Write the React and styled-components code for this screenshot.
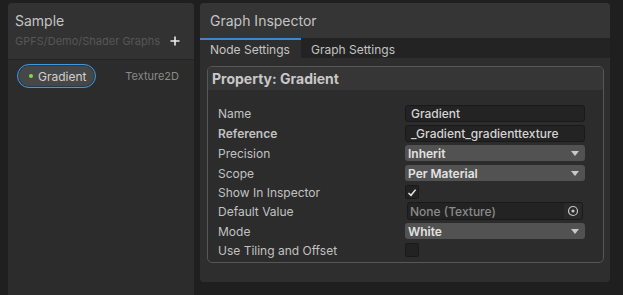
import React from 'react';
import styled, { createGlobalStyle } from 'styled-components';

const GlobalStyle = createGlobalStyle`
  html, body {
    margin: 0;
    padding: 0;
    background: #1f1f1f;
    font-family: Inter, "Noto Sans", sans-serif;
    overflow: hidden;
  }
`;

const Page = styled.div`
  display: flex;
  align-items: flex-start;
  gap: 6px;
  padding: 3px 0 0 8px;
  height: 292px;
`;

const Blackboard = styled.div`
  width: 186px;
  height: 300px;
  background: #2c2c2c;
  border-radius: 4px 4px 0 0;
  display: flex;
  flex-direction: column;
`;

const BoardHeader = styled.div`
  height: 56px;
  background: #323232;
  border-bottom: 1px solid #242424;
  border-radius: 4px 4px 0 0;
  padding: 0 7px;
  display: flex;
  flex-direction: column;
`;

const BoardTitle = styled.div`
  font-size: 14px;
  color: #c4c4c4;
  margin-top: 9px;
  line-height: 17px;
`;

const SubRow = styled.div`
  display: flex;
  align-items: center;
  justify-content: space-between;
  margin-top: 5px;
`;

const SubTitle = styled.span`
  font-size: 11px;
  color: #565656;
`;

const AddButton = styled.span`
  display: flex;
  margin-right: 7px;
`;

const PropRow = styled.div`
  display: flex;
  align-items: center;
  justify-content: space-between;
  padding: 4px 15px 0 9px;
`;

const Pill = styled.div`
  display: flex;
  align-items: center;
  gap: 5px;
  height: 22px;
  width: 77px;
  border: 1px solid #3d9ae0;
  border-radius: 12px;
  background: #474747;
  box-shadow: inset 0 0 0 1px #263a4a;
  font-size: 12px;
  color: #d0d0d0;
`;

const Dot = styled.span`
  width: 4px;
  height: 4px;
  border-radius: 50%;
  background: #84d84c;
  margin-left: 11px;
`;

const TypeLabel = styled.span`
  font-size: 11px;
  color: #8a8a8a;
`;

const Inspector = styled.div`
  width: 410px;
  height: 279px;
  background: #2e2e2e;
  border-radius: 4px;
  display: flex;
  flex-direction: column;
`;

const InspectorHeader = styled.div`
  height: 35px;
  background: #353535;
  border-radius: 4px 4px 0 0;
  padding-left: 10px;
  font-size: 14px;
  color: #c4c4c4;
  display: flex;
  align-items: center;
`;

const TabBar = styled.div`
  display: flex;
  height: 20px;
  background: #232323;
`;

const Tab = styled.div`
  width: ${p => p.$width}px;
  box-sizing: border-box;
  padding-left: 10px;
  font-size: 12px;
  color: #c4c4c4;
  display: flex;
  align-items: center;
  background: ${p => (p.$active ? '#2e2e2e' : 'transparent')};
  border-top: 2px solid ${p => (p.$active ? '#3b87d0' : 'transparent')};
`;

const Body = styled.div`
  padding: 8px 6px 0 7px;
`;

const Section = styled.div`
  border: 1px solid #575757;
  border-radius: 5px;
  background: #2c2c2c;
  padding-bottom: 2px;
`;

const SectionTitle = styled.div`
  height: 23px;
  background: #363636;
  border-radius: 4px 4px 0 0;
  padding-left: 4px;
  font-size: 14px;
  font-weight: 700;
  color: #c8c8c8;
  display: flex;
  align-items: center;
  margin-bottom: 14px;
`;

const FieldRow = styled.div`
  display: flex;
  align-items: center;
  height: ${p => (p.$short ? 16 : 18)}px;
  margin-bottom: 2px;
  padding-left: 10px;
`;

const Label = styled.span`
  width: 187px;
  font-size: 12px;
  color: #c2c2c2;
  font-weight: ${p => (p.$bold ? 600 : 400)};
`;

const TextField = styled.div`
  width: 180px;
  height: 17px;
  box-sizing: border-box;
  background: #232323;
  border: 1px solid #191919;
  border-radius: 3px;
  padding-left: 5px;
  font-size: 12px;
  font-weight: 500;
  color: #d4d4d4;
  display: flex;
  align-items: center;
`;

const Dropdown = styled.div`
  width: 180px;
  height: 16px;
  box-sizing: border-box;
  background: #525252;
  border-radius: 3px;
  padding: 0 6px 0 3px;
  font-size: 12px;
  font-weight: 600;
  color: #e2e2e2;
  display: flex;
  align-items: center;
  justify-content: space-between;
`;

const Arrow = styled.span`
  width: 0;
  height: 0;
  border-left: 4px solid transparent;
  border-right: 4px solid transparent;
  border-top: 5px solid #c8c8c8;
`;

const Checkbox = styled.div`
  width: 14px;
  height: 14px;
  box-sizing: border-box;
  background: #222222;
  border: 1px solid #191919;
  border-radius: 2px;
  display: flex;
  align-items: center;
  justify-content: center;
`;

const ObjectField = styled.div`
  width: 176px;
  height: 18px;
  margin-left: 2px;
  box-sizing: border-box;
  background: #232323;
  border: 1px solid #191919;
  border-radius: 3px;
  display: flex;
  align-items: center;
  overflow: hidden;
`;

const ObjectText = styled.span`
  flex: 1;
  padding-left: 2px;
  font-size: 12px;
  font-weight: 500;
  color: #8a8a8a;
`;

const PickButton = styled.span`
  width: 18px;
  height: 100%;
  background: #2a2a2a;
  display: flex;
  align-items: center;
  justify-content: center;
`;

const Plus = () => (
  <svg width="10" height="10" viewBox="0 0 10 10">
    <path d="M5 0.5 V9.5 M0.5 5 H9.5" stroke="#ececec" strokeWidth="1.6" />
  </svg>
);

const Check = () => (
  <svg width="10" height="9" viewBox="0 0 10 9">
    <path d="M1.5 5 L4 7.3 L8.6 1.6" fill="none" stroke="#e8e8e8" strokeWidth="1.5" />
  </svg>
);

const Target = () => (
  <svg width="12" height="12" viewBox="0 0 12 12">
    <circle cx="6" cy="6" r="4.5" fill="none" stroke="#c4c4c4" strokeWidth="1.2" />
    <circle cx="6" cy="6" r="1.6" fill="#c4c4c4" />
  </svg>
);

const rows = [
  { label: 'Name', kind: 'text', value: 'Gradient' },
  { label: 'Reference', kind: 'text', value: '_Gradient_gradienttexture', bold: true },
  { label: 'Precision', kind: 'drop', value: 'Inherit' },
  { label: 'Scope', kind: 'drop', value: 'Per Material' },
  { label: 'Show In Inspector', kind: 'check', value: true },
  { label: 'Default Value', kind: 'object', value: 'None (Texture)' },
  { label: 'Mode', kind: 'drop', value: 'White' },
  { label: 'Use Tiling and Offset', kind: 'check', value: false },
];

const renderField = row => {
  if (row.kind === 'text') return <TextField>{row.value}</TextField>;
  if (row.kind === 'drop') return <Dropdown>{row.value}<Arrow /></Dropdown>;
  if (row.kind === 'check') return <Checkbox>{row.value && <Check />}</Checkbox>;
  return (
    <ObjectField>
      <ObjectText>{row.value}</ObjectText>
      <PickButton><Target /></PickButton>
    </ObjectField>
  );
};

export default function App() {
  return (
    <>
      <GlobalStyle />
      <Page>
        <Blackboard>
          <BoardHeader>
            <BoardTitle>Sample</BoardTitle>
            <SubRow>
              <SubTitle>GPFS/Demo/Shader Graphs</SubTitle>
              <AddButton><Plus /></AddButton>
            </SubRow>
          </BoardHeader>
          <PropRow>
            <Pill><Dot />Gradient</Pill>
            <TypeLabel>Texture2D</TypeLabel>
          </PropRow>
        </Blackboard>

        <Inspector>
          <InspectorHeader>Graph Inspector</InspectorHeader>
          <TabBar>
            <Tab $active $width={101}>Node Settings</Tab>
            <Tab $width={110}>Graph Settings</Tab>
          </TabBar>
          <Body>
            <Section>
              <SectionTitle>Property: Gradient</SectionTitle>
              {rows.map(row => (
                <FieldRow key={row.label} $short={row.kind === 'check'}>
                  <Label $bold={row.bold}>{row.label}</Label>
                  {renderField(row)}
                </FieldRow>
              ))}
            </Section>
          </Body>
        </Inspector>
      </Page>
    </>
  );
}
